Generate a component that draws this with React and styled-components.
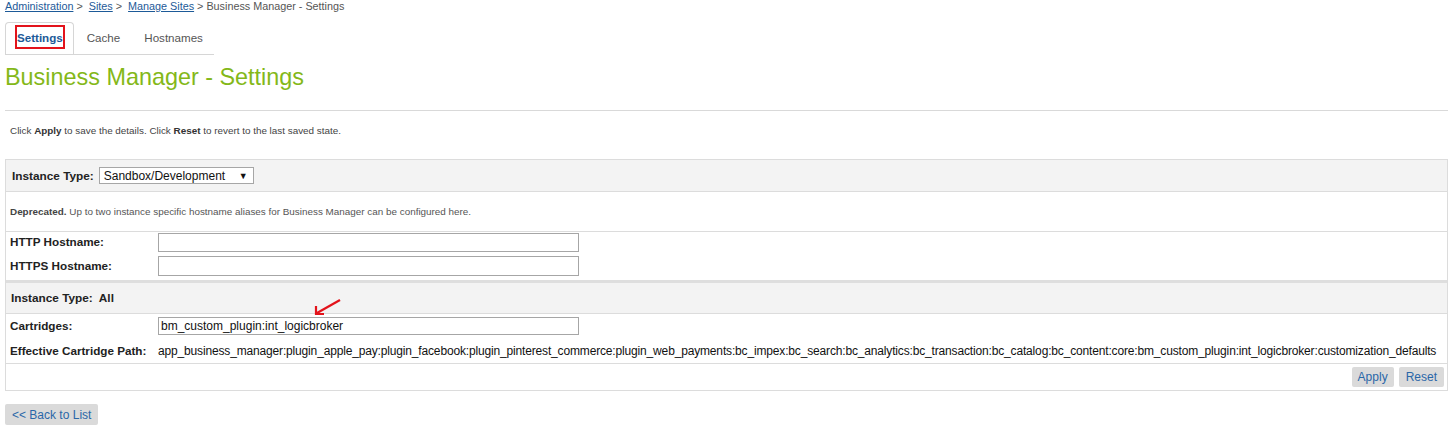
import React from "react";
import styled, { createGlobalStyle } from "styled-components";

const Global = createGlobalStyle`
  html, body { margin: 0; padding: 0; background: #fff; }
  body { font-family: "Liberation Sans", Arial, sans-serif; color: #222; }
`;

const Page = styled.div`
  position: relative;
  padding: 0 4px 0 5px;
  width: 1452px;
  box-sizing: border-box;
`;

const Crumbs = styled.div`
  font-size: 10.8px;
  line-height: 13px;
  color: #555;
  display: flex;
`;

const CrumbLink = styled.a`
  color: #1d5a98;
  text-decoration: underline;
  cursor: pointer;
`;

const Sep = styled.span`
  white-space: pre;
  color: #555;
`;

const TabBar = styled.div`
  display: flex;
  margin-top: 9px;
  width: fit-content;
  border-bottom: 1px solid #d6d6d6;
  height: 32px;
  box-sizing: content-box;
`;

const Tab = styled.div`
  position: relative;
  font-size: 11.6px;
  line-height: 30px;
  padding: 0 ${(p) => (p.$active ? "10px" : "10px")} 0 ${(p) => (p.$active ? "11px" : "12px")};
  color: ${(p) => (p.$active ? "#1d5a98" : "#555")};
  font-weight: ${(p) => (p.$active ? "bold" : "normal")};
  border: 1px solid ${(p) => (p.$active ? "#d6d6d6" : "transparent")};
  border-bottom: none;
  border-radius: 4px 4px 0 0;
  background: #fff;
  margin-bottom: -1px;
  height: 32px;
  box-sizing: border-box;
`;

const Mark = styled.span`
  position: absolute;
  left: 9px;
  top: 2px;
  width: 50px;
  height: 24px;
  border: 2px solid #e3131b;
  box-sizing: border-box;
`;

const Title = styled.h1`
  margin: 8px 0 0;
  font-size: 23.4px;
  line-height: 28px;
  font-weight: normal;
  color: #84b819;
`;

const Rule = styled.hr`
  margin: 19px 0 0;
  border: none;
  border-top: 1px solid #d9d9d9;
`;

const Info = styled.p`
  margin: 14px 0 0 5px;
  font-size: 9.9px;
  line-height: 12px;
  color: #444;
  b { color: #333; }
`;

const Panel = styled.div`
  margin-top: 22px;
  border: 1px solid #dcdcdc;
  border-bottom: none;
`;

const HeadRow = styled.div`
  display: flex;
  align-items: center;
  gap: 5px;
  background: #f3f3f3;
  height: ${(p) => p.$h}px;
  padding-left: ${(p) => p.$pl}px;
  border-top: ${(p) => (p.$thick ? "3px solid #dedede" : "none")};
  border-bottom: 1px solid #dcdcdc;
  font-size: 11.8px;
  font-weight: bold;
  color: #222;
`;

const SelectBox = styled.div`
  display: flex;
  align-items: center;
  justify-content: space-between;
  width: 155px;
  height: 17px;
  box-sizing: border-box;
  border: 1px solid #a6a6a6;
  background: #fff;
  padding: 0 5px 0 4px;
  font-size: 12px;
  font-weight: normal;
  color: #111;
`;

const Caret = styled.span`
  font-size: 9px;
`;

const Note = styled.div`
  height: 39px;
  display: flex;
  align-items: center;
  padding-left: 4px;
  border-bottom: 1px solid #dcdcdc;
  font-size: 9.9px;
  color: #555;
  b { font-weight: bold; color: #444; }
`;

const Fields = styled.div`
  display: grid;
  grid-template-columns: 148px 1fr;
  row-gap: ${(p) => p.$gap}px;
  align-items: center;
  padding: ${(p) => p.$pad};
`;

const Label = styled.div`
  font-size: 11.7px;
  font-weight: bold;
  color: #222;
  line-height: 20px;
`;

const Input = styled.input`
  width: 421px;
  height: ${(p) => p.$h || 20}px;
  box-sizing: border-box;
  border: 1px solid #a6a6a6;
  padding: 0 2px;
  margin: 0;
  font-family: "Liberation Sans", Arial, sans-serif;
  font-size: 12px;
  color: #111;
`;

const PathText = styled.div`
  font-size: 12px;
  letter-spacing: -0.16px;
  color: #111;
  white-space: nowrap;
  line-height: 20px;
`;

const Actions = styled.div`
  display: flex;
  justify-content: flex-end;
  gap: 5px;
  padding: 3px 3px 0;
  height: 28px;
  box-sizing: border-box;
  margin: 0 -1px;
  border: 1px solid #dcdcdc;
`;

const Button = styled.button`
  font-family: "Liberation Sans", Arial, sans-serif;
  font-size: 12px;
  color: #2a67a8;
  background: #dadada;
  border: none;
  border-radius: 2px;
  height: ${(p) => p.$h || 20}px;
  padding: 0 ${(p) => p.$px || 6}px;
  margin: 0;
  cursor: pointer;
`;

const BackRow = styled.div`
  margin-top: 13px;
`;

const Arrow = styled.svg`
  position: absolute;
  left: 313px;
  top: 298px;
`;

export default function App() {
  const path =
    "app_business_manager:plugin_apple_pay:plugin_facebook:plugin_pinterest_commerce:plugin_web_payments:bc_impex:bc_search:bc_analytics:bc_transaction:bc_catalog:bc_content:core:bm_custom_plugin:int_logicbroker:customization_defaults";
  return (
    <Page>
      <Global />
      <Crumbs>
        <CrumbLink>Administration</CrumbLink>
        <Sep> &gt;  </Sep>
        <CrumbLink>Sites</CrumbLink>
        <Sep> &gt;  </Sep>
        <CrumbLink>Manage Sites</CrumbLink>
        <Sep> &gt; Business Manager - Settings</Sep>
      </Crumbs>
      <TabBar>
        <Tab $active>
          Settings
          <Mark />
        </Tab>
        <Tab>Cache</Tab>
        <Tab>Hostnames</Tab>
      </TabBar>
      <Title>Business Manager - Settings</Title>
      <Rule />
      <Info>
        Click <b>Apply</b> to save the details. Click <b>Reset</b> to revert to the last saved state.
      </Info>
      <Panel>
        <HeadRow $h={31} $pl={6}>
          Instance Type:
          <SelectBox>
            Sandbox/Development <Caret>▼</Caret>
          </SelectBox>
        </HeadRow>
        <Note>
          <span>
            <b>Deprecated.</b> Up to two instance specific hostname aliases for Business Manager can be configured here.
          </span>
        </Note>
        <Fields $gap={4} $pad="0 4px 4px">
          <Label>HTTP Hostname:</Label>
          <Input $h={19} />
          <Label>HTTPS Hostname:</Label>
          <Input $h={20} />
        </Fields>
        <HeadRow $h={30} $pl={5} $thick>
          Instance Type:&nbsp; All
        </HeadRow>
        <Fields $gap={5} $pad="2px 4px 2px">
          <Label>Cartridges:</Label>
          <Input $h={18} defaultValue="bm_custom_plugin:int_logicbroker" />
          <Label>Effective Cartridge Path:</Label>
          <PathText>{path}</PathText>
        </Fields>
        <Actions>
          <Button $px={6}>Apply</Button>
          <Button $px={7}>Reset</Button>
        </Actions>
      </Panel>
      <BackRow>
        <Button $px={7} $h={21}>&lt;&lt; Back to List</Button>
      </BackRow>
      <Arrow width="30" height="18" viewBox="0 0 30 18">
        <path d="M27 2 L4 15" stroke="#e3131b" strokeWidth="2.2" fill="none" />
        <path d="M3 8 L3 16 L11 16" stroke="#e3131b" strokeWidth="2.2" fill="none" />
      </Arrow>
    </Page>
  );
}
